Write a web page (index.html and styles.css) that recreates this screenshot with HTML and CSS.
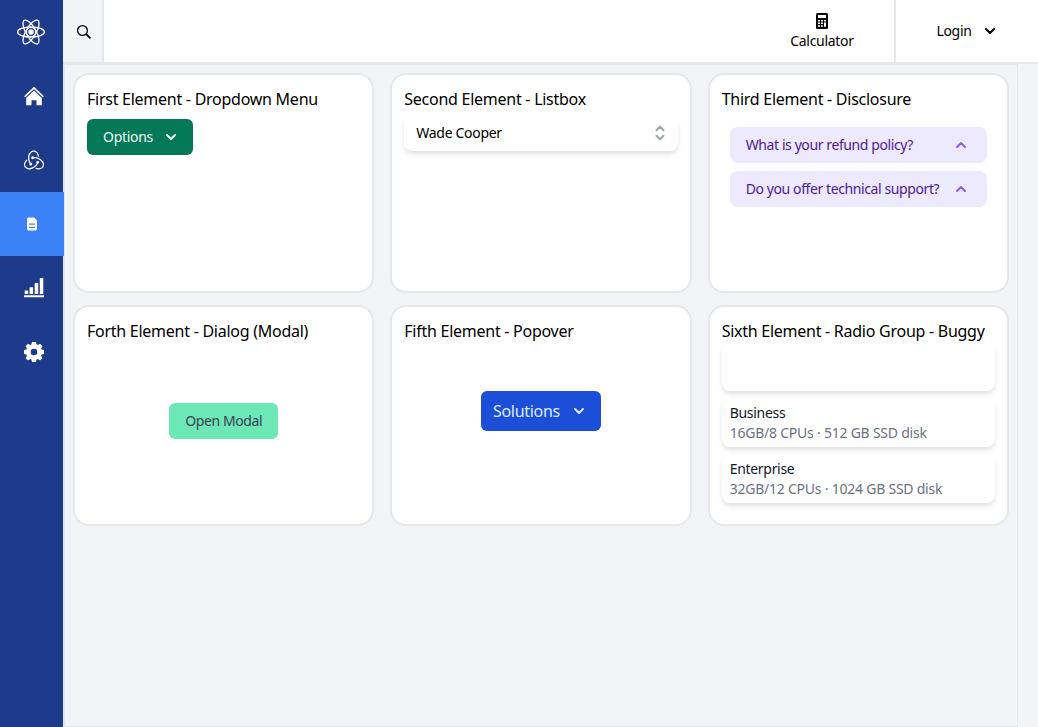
FILE: index.html
```html
<!DOCTYPE html>
<html lang="en">
<head>
<meta charset="utf-8">
<title>Headless UI elements</title>
<link rel="stylesheet" href="styles.css">
</head>
<body>
<div class="app">
  <nav class="sidebar">
    <a class="nav-item logo">
      <svg width="30" height="30" viewBox="0 0 30 30" fill="none" stroke="currentColor" stroke-width="1.3">
        <ellipse cx="15" cy="15" rx="13.4" ry="5"/>
        <ellipse cx="15" cy="15" rx="13.4" ry="5" transform="rotate(60 15 15)"/>
        <ellipse cx="15" cy="15" rx="13.4" ry="5" transform="rotate(120 15 15)"/>
        <circle cx="15" cy="15" r="4.5" stroke-width="1"/>
        <circle cx="15" cy="15" r="2.7" fill="currentColor" stroke="none"/>
      </svg>
    </a>
    <a class="nav-item">
      <svg width="20" height="20" viewBox="0 0 20 20" fill="currentColor">
        <path d="M10 4.300 2.200 11.700V19.200h5.300v-5h5v5h5.300v-7.500z"/>
        <path d="M.7 10.900 10 1.900l9.300 9" fill="none" stroke="currentColor" stroke-width="1.600"/>
        <path d="m1.500 12.100 8.500-8.100 8.500 8.100" fill="none" stroke="#1e3a8a" stroke-width=".7"/>
      </svg>
    </a>
    <a class="nav-item">
      <svg width="20" height="20" viewBox="0 0 24 24" fill="currentColor">
        <path d="M16.634 16.504c.87-.075 1.543-.84 1.5-1.754-.047-.914-.796-1.648-1.709-1.648h-.061a1.71 1.71 0 00-1.648 1.769c.03.479.226.869.494 1.153-1.048 2.038-2.621 3.535-5.005 4.795-1.603.838-3.296 1.154-4.944.929-1.378-.194-2.456-.81-3.116-1.799-.988-1.499-1.078-3.116-.255-4.734.601-1.166 1.499-2.023 2.099-2.443a9.96 9.96 0 01-.42-1.543C-.868 14.408-.416 18.752.932 20.805c1.004 1.498 3.057 2.456 5.304 2.456.599 0 1.223-.044 1.843-.194 3.896-.749 6.847-3.086 8.541-6.532zm5.348-3.746c-2.32-2.728-5.738-4.226-9.634-4.226h-.51c-.253-.554-.837-.899-1.498-.899h-.045c-.943 0-1.678.81-1.647 1.753.03.898.794 1.648 1.708 1.648h.074a1.69 1.69 0 001.499-1.049h.555c2.309 0 4.495.674 6.488 1.992 1.527 1.005 2.622 2.323 3.237 3.896.538 1.288.509 2.547-.045 3.597-.855 1.647-2.294 2.517-4.196 2.517-1.199 0-2.367-.375-2.967-.644-.36.298-.96.793-1.394 1.093 1.318.598 2.652.943 3.94.943 2.922 0 5.094-1.647 5.919-3.236.898-1.798.824-4.824-1.47-7.416zM6.49 17.042c.03.899.793 1.648 1.708 1.648h.06a1.688 1.688 0 001.648-1.768c0-.9-.779-1.647-1.693-1.647h-.06c-.06 0-.149 0-.226.029-1.243-2.098-1.768-4.347-1.572-6.772.12-1.828.72-3.417 1.797-4.735.899-1.124 2.593-1.68 3.746-1.708 3.236-.061 4.585 3.971 4.689 5.574l1.498.45c-.345-4.914-3.4-7.492-6.322-7.492-2.742 0-5.273 1.993-6.293 4.915-1.393 3.896-.479 7.641 1.229 10.638-.149.195-.239.554-.209.868z"/>
      </svg>
    </a>
    <a class="nav-item active">
      <svg width="16" height="16" viewBox="0 0 16 16">
        <path d="M4.800 1.500h5.400L13 4.600v8.200c0 1-.6 1.700-1.600 1.700H4.600c-1 0-1.600-.7-1.600-1.700V3.200c0-1 .7-1.700 1.800-1.700z" fill="currentColor"/>
        <path d="M5 8.200h6M5 11.300h6" stroke="#3b82f6" stroke-width="1.200"/>
      </svg>
    </a>
    <a class="nav-item">
      <svg width="20" height="20" viewBox="0 0 20 20" fill="currentColor">
        <path d="M.7 12.600h3.500V16H.7zM5.600 9.200h3.500V16H5.600zM10.700 5h3.500v11h-3.500zM15.800 0h3.500v16h-3.500zM0 17.200h20v2.100H0z"/>
      </svg>
    </a>
    <a class="nav-item">
      <svg width="20" height="20" viewBox="0 0 20 20">
        <path fill="currentColor" fill-rule="evenodd" d="M8 0h4l.6 2.600 1.200.5L16.100 1.700l2.400 2.500-1.400 2.200.5 1.200L20 8.100v3.800l-2.400.6-.5 1.200 1.400 2.200-2.500 2.500-2.200-1.400-1.200.5L12 20H8l-.6-2.500-1.200-.5L4 18.400l-2.500-2.500 1.400-2.200-.5-1.200L0 11.900V8.100l2.400-.5.5-1.200-1.400-2.200L3.900 1.700l2.300 1.400 1.200-.5zM10 6.700a3.300 3.300 0 1 0 0 6.600 3.300 3.300 0 0 0 0-6.600z"/>
      </svg>
    </a>
  </nav>
  <div class="page">
    <header class="topbar">
      <button class="search" aria-label="Search">
        <svg width="16" height="16" viewBox="0 0 16 16" fill="none" stroke="currentColor" stroke-width="1.300"><circle cx="6.500" cy="6.500" r="4.900"/><path d="m10.200 10.200 4.300 4.100" stroke-width="1.700"/></svg>
      </button>
      <div class="calculator">
        <svg width="16" height="16" viewBox="0 0 16 16"><rect x="2" width="12" height="16" rx="1.500" fill="currentColor"/><path fill="#fff" d="M4 2h8v3H4zM4 7h2v1.500H4zM7 7h2v1.500H7zM10 7h2v1.500h-2zM4 9.600h2v1.500H4zM7 9.600h2v1.500H7zM4 12.200h2v1.500H4zM7 12.200h2v1.500H7zM10 9.600h2v4.100h-2z"/></svg>
        <span>Calculator</span>
      </div>
      <button class="login"><span>Login</span>
        <svg class="chevron" viewBox="0 0 20 20"><path d="m6 8 4 4 4-4"/></svg>
      </button>
    </header>
    <main class="content">
      <section class="card">
        <h2>First Element - Dropdown Menu</h2>
        <button class="btn options">Options <svg class="chevron" viewBox="0 0 20 20"><path d="m6 8 4 4 4-4"/></svg></button>
      </section>
      <section class="card">
        <h2>Second Element - Listbox</h2>
        <button class="listbox"><span>Wade Cooper</span>
          <svg class="selector" viewBox="0 0 20 20"><path d="m6.500 7.200 3.500-3.500 3.500 3.500M6.500 12.800l3.500 3.500 3.500-3.500"/></svg>
        </button>
      </section>
      <section class="card">
        <h2>Third Element - Disclosure</h2>
        <div class="disclosures">
          <button class="disclosure"><span>What is your refund policy?</span><svg class="chevron" viewBox="0 0 20 20"><path d="m6 12 4-4 4 4"/></svg></button>
          <button class="disclosure"><span>Do you offer technical support?</span><svg class="chevron" viewBox="0 0 20 20"><path d="m6 12 4-4 4 4"/></svg></button>
        </div>
      </section>
      <section class="card">
        <h2>Forth Element - Dialog (Modal)</h2>
        <div class="center"><button class="btn modal">Open Modal</button></div>
      </section>
      <section class="card">
        <h2>Fifth Element - Popover</h2>
        <div class="center popover"><button class="btn solutions">Solutions <svg class="chevron" viewBox="0 0 20 20"><path d="m6 8 4 4 4-4"/></svg></button></div>
      </section>
      <section class="card">
        <h2>Sixth Element - Radio Group - Buggy</h2>
        <div class="radios">
          <div class="radio"></div>
          <div class="radio"><p>Business</p><p class="spec">16GB/8 CPUs · 512 GB SSD disk</p></div>
          <div class="radio"><p>Enterprise</p><p class="spec">32GB/12 CPUs · 1024 GB SSD disk</p></div>
        </div>
      </section>
    </main>
  </div>
</div>
</body>
</html>
```
FILE: styles.css
```css
* { box-sizing: border-box; margin: 0; }
body { font: 14px/20px "Noto Sans", sans-serif; letter-spacing: -.3px; color: #000; background: #f3f4f6; overflow: hidden; }
button { font: inherit; letter-spacing: inherit; color: inherit; border: 0; background: none; padding: 0; }
svg { display: block; flex: none; }

.app { display: flex; height: 727px; }
.sidebar { width: 63px; flex: none; background: #1e3a8a; color: #fff; }
.nav-item { display: flex; align-items: center; justify-content: center; width: 64px; height: 64px; padding-left: 4px; }
.nav-item.logo { padding: 0 2px 0 0; }
.nav-item.active { background: #3b82f6; padding: 0; position: relative; }

.page { flex: 1; min-width: 0; display: flex; flex-direction: column; }
.topbar { display: flex; height: 64px; flex: none; background: #fff; border-bottom: 2px solid #e5e7eb; }
.search { width: 41px; background: #f3f4f6; border-right: 2px solid #e5e7eb; display: flex; align-items: center; padding: 2px 0 0 13px; }
.calculator { width: 144px; margin-left: auto; padding-bottom: 4px; display: flex; flex-direction: column; align-items: center; justify-content: center; gap: 2px; }
.calculator span { margin-bottom: -5px; }
.login { width: 144px; padding-left: 2px; border-left: 2px solid #e5e7eb; display: flex; align-items: center; justify-content: center; gap: 8px; }
.chevron, .selector { width: 20px; height: 20px; fill: none; stroke: currentColor; stroke-width: 2; stroke-linecap: round; stroke-linejoin: round; }

.content { flex: 1; width: 955px; border: 1px solid #e5e7eb; border-left-width: 2px; padding: 8px; display: grid; grid-template-columns: repeat(3, 1fr); grid-template-rows: 220px 221px; align-content: start; gap: 12px 16px; }
.card { background: #fff; border: 2px solid #e5e7eb; border-radius: 16px; padding: 12px; display: flex; flex-direction: column; align-items: flex-start; min-width: 0; }
.card h2 { font-size: 16px; line-height: 24px; font-weight: 400; letter-spacing: -.26px; white-space: nowrap; }

.btn { display: flex; align-items: center; border-radius: 6px; white-space: nowrap; }
.options { width: 106px; height: 36px; margin-top: 8px; padding: 0 12px 0 16px; justify-content: space-between; background: #047857; color: #ecfdf5; }
.listbox { width: 100%; height: 36px; margin-top: 4px; padding: 0 8px 0 12px; display: flex; align-items: center; justify-content: space-between; border-radius: 8px; background: #fff; box-shadow: 0 4px 6px -1px #0000001a, 0 2px 4px -1px #0000000f; }
.selector { color: #9ca3af; }
.disclosures { width: 100%; padding: 16px 8px 0; display: flex; flex-direction: column; gap: 8px; }
.disclosure { height: 36px; padding: 0 16px; display: flex; align-items: center; justify-content: space-between; border-radius: 8px; background: #ede9fe; color: #4c1d95; letter-spacing: -.4px; white-space: nowrap; }
.disclosure .chevron { color: #8b5cf6; }
.center { width: 100%; flex: 1; display: flex; align-items: center; justify-content: center; padding-bottom: 13px; }
.center.popover { padding-bottom: 33px; }
.modal { width: 109px; height: 36px; justify-content: center; background: #6ee7b7; color: #374151; letter-spacing: -.4px; }
.solutions { width: 120px; height: 40px; padding: 0 12px; justify-content: space-between; background: #1d4ed8; color: #dbeafe; font-size: 16px; }
.radios { width: 100%; display: flex; flex-direction: column; gap: 8px; }
.radio { height: 48px; padding: 4px 8px; border-radius: 8px; background: #fff; color: #111827; box-shadow: 0 4px 6px -1px #0000001a, 0 2px 4px -1px #0000000f; }
.spec { color: #6b7280; letter-spacing: -.23px; }
```
